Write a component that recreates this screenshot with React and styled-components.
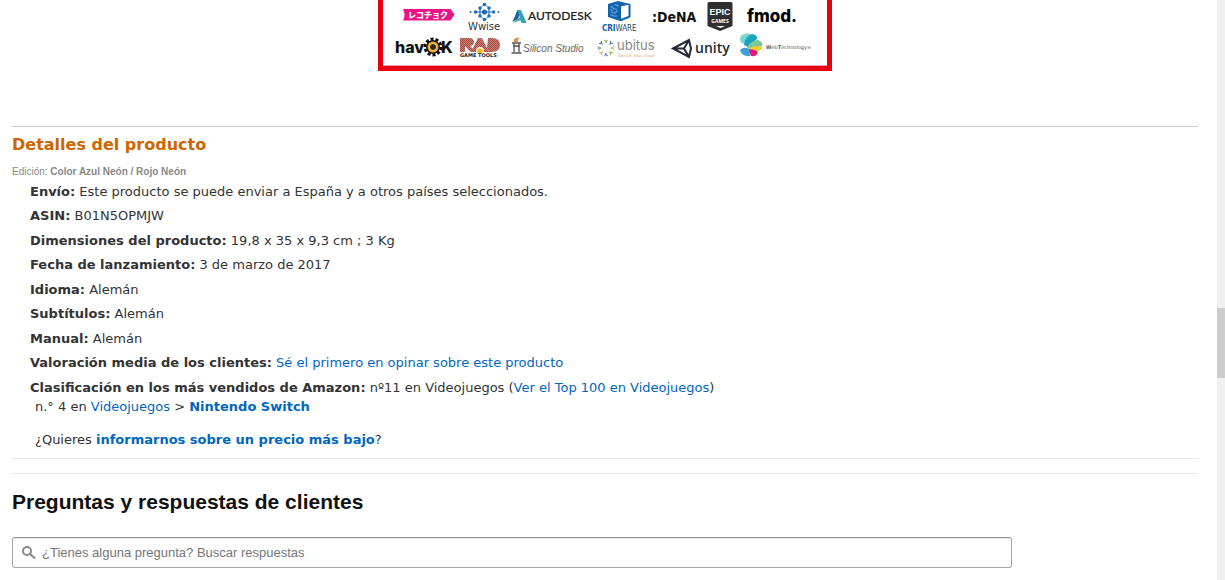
import React from 'react'
import styled, { createGlobalStyle } from 'styled-components'

const GlobalStyle = createGlobalStyle`
  * {
    box-sizing: border-box;
  }
  body {
    margin: 0;
    background: #fff;
    color: #333;
    font-family: Verdana, 'DejaVu Sans', sans-serif;
    font-size: 13px;
    line-height: 19px;
  }
`

const Page = styled.div`
  display: flex;
  min-height: 100vh;
`
const Main = styled.main`
  flex: 1;
  min-width: 0;
  padding: 0 19px 0 12px;
`
const ScrollTrack = styled.div`
  display: grid;
  grid-template-rows: 308fr 70fr 202fr;
  width: 8px;
  background: #f0f0f0;
`
const ScrollThumb = styled.div`
  grid-row: 2;
  background: #cdcdcd;
`
const Banner = styled.div`
  width: fit-content;
  margin: 0 auto 55px;
  border: solid #e60012;
  border-width: 0 5px 5px;

  svg {
    display: block;
  }
`
const Rule = styled.hr`
  margin: 0;
  border: 0;
  border-top: 1px solid ${(props) => (props.$dark ? '#ccc' : '#e7e7e7')};

  & + & {
    margin-top: 14px;
  }
`
const DetailsTitle = styled.h2`
  margin: 7px 0 8px;
  font-size: 16px;
  line-height: 22px;
  color: #c60;
`
const Edition = styled.p`
  margin: 0 0 3px;
  font-family: Arial, 'Liberation Sans', sans-serif;
  font-size: 10px;
  line-height: 15px;
  color: #888;
`
const DetailList = styled.ul`
  margin: 0 0 9px;
  padding: 0 0 0 18px;
  list-style: none;
`
const Detail = styled.li`
  margin-bottom: 5px;

  &:nth-child(even) {
    margin-bottom: 6px;
  }
  &:last-child {
    margin-bottom: 0;
  }
`
const Note = styled.p`
  margin: 0;
  padding-left: 5px;

  & + & {
    margin-top: 14px;
  }
`
const Link = styled.a`
  color: #0066c0;
  font-weight: ${(props) => (props.$bold ? 'bold' : 'normal')};
  text-decoration: none;

  &:hover {
    text-decoration: underline;
  }
`
const QuestionsTitle = styled.h2`
  margin: 14px 0 21px;
  font-family: Arial, 'Liberation Sans', sans-serif;
  font-size: 21px;
  line-height: 28px;
  color: #111;
`
const SearchBox = styled.label`
  display: flex;
  align-items: center;
  gap: 6px;
  max-width: 1000px;
  height: 31px;
  padding: 0 9px;
  border: 1px solid #a6a6a6;
  border-top-color: #949494;
  border-radius: 3px;
  box-shadow: 0 1px 0 rgba(0, 0, 0, 0.07) inset;
`
const SearchInput = styled.input`
  flex: 1;
  min-width: 0;
  padding: 0;
  border: 0;
  outline: 0;
  background: none;
  font-family: Arial, 'Liberation Sans', sans-serif;
  font-size: 13px;
  line-height: 19px;
  color: #111;

  &::placeholder {
    color: #767676;
    opacity: 1;
  }
`

const wwiseDots = [
  [470.5, 12, 1],
  [475.5, 12, 1.8],
  [480, 8, 1.8],
  [480, 16, 1.8],
  [484.5, 4.5, 1.8],
  [484.5, 12, 2.6],
  [484.5, 19.5, 1.8],
  [489, 8, 1.8],
  [489, 16, 1.8],
  [493.5, 12, 1.8],
  [498.5, 12, 1],
]

const burstColors = ['#8fae4a', '#4a78a8', '#c8b84a', '#8fae4a', '#5a82a8', '#c8b84a', '#6f9a58', '#4a78a8']

const Partners = () => (
  <svg width="444" height="66" viewBox="383 0 444 66" role="img" aria-label="Socios">
    <defs>
      <pattern id="hatch" width="2" height="2" patternUnits="userSpaceOnUse">
        <rect width="2" height="2" fill="#c9827a" />
        <rect width="1" height="1" fill="#a9483f" />
        <rect x="1" y="1" width="1" height="1" fill="#a9483f" />
      </pattern>
    </defs>
    <rect x="383" y="65" width="444" height="1" fill="#f9a9b0" />

    <path d="M403 9h47.500l4 5.500-4 6H403q3-5.500 0-11.500z" fill="#ee1289" />
    <text x="408" y="18" fill="#fff" fontFamily="Noto Sans CJK JP, sans-serif" fontWeight="900" fontSize="8">
      レコチョク
    </text>

    <path d="M475 12h19M480 8v8M489 8v8" stroke="#2b74b8" strokeWidth="1.200" />
    <path d="M480 8l4.500-3.500L489 8M480 16l4.500 3.500L489 16" fill="none" stroke="#2b74b8" strokeWidth="0.700" />
    {wwiseDots.map(([x, y, r]) => (
      <circle key={`${x}-${y}`} cx={x} cy={y} r={r} fill="#2070b8" />
    ))}
    <text x="468" y="30" fill="#333" fontFamily="DejaVu Sans, sans-serif" fontSize="10">
      Wwise
    </text>

    <path d="M512.500 22l5-12h3.500l-3 9z" fill="#1f5fa8" />
    <path d="M512.500 23l7-5.500 2 2.500z" fill="#41b59a" />
    <path d="M517.500 10h3.500l5.500 13h-5z" fill="#31a3b8" />
    <text
      x="528"
      y="20"
      fill="#222"
      stroke="#222"
      strokeWidth="0.200"
      fontFamily="Lato, sans-serif"
      fontWeight="500"
      fontSize="12"
    >
      AUTODESK
    </text>

    <path d="M608 4l10-3 12 3v13l-10 4-12-4z" fill="#1261ac" />
    <path d="M620.500 6l8-2v12l-8 3z" fill="#fff" />
    <path d="M620.500 6l9.500-2v13l-9.500 4z" fill="none" stroke="#1261ac" />
    <path
      d="M610 7h3v2h4M610 10h2v3h4v-2h2M610 15h3v1h4M614 5h4v2"
      fill="none"
      stroke="#9cc4e8"
      strokeWidth="0.700"
    />
    <text x="602" y="31" fontFamily="Liberation Sans Narrow, DejaVu Sans Condensed, sans-serif" fontSize="8">
      <tspan fill="#0d5ca8" fontWeight="bold">
        CRI
      </tspan>
      <tspan fill="#345">WARE</tspan>
    </text>

    <text x="652" y="22" fill="#111" fontFamily="DejaVu Sans Condensed, sans-serif" fontWeight="600" fontSize="14">
      :DeNA
    </text>

    <path d="M709 2h22q1.500 0 1.500 1.500V26l-12.500 5-12.500-5V3.500Q707.500 2 709 2z" fill="#2f2f33" />
    <g fill="#fff" textAnchor="middle" fontWeight="bold">
      <text x="720" y="15" fontFamily="Liberation Sans, sans-serif" fontSize="9">
        EPIC
      </text>
      <text x="720" y="23" fontFamily="Open Sans, sans-serif" fontSize="5">
        GAMES
      </text>
    </g>
    <path d="M716 26h9l-4.500 2z" fill="#fff" />

    <text x="747" y="22" fill="#000" fontFamily="Inter, sans-serif" fontWeight="800" fontSize="17">
      fmod.
    </text>

    <g fill="#111" fontFamily="Inter, sans-serif" fontWeight="800" fontSize="16">
      <text x="395" y="53">
        hav
      </text>
      <text x="441" y="53">
        K
      </text>
    </g>
    <circle cx="433" cy="47" r="8" fill="none" stroke="#111" strokeWidth="3" strokeDasharray="3 2" />
    <circle cx="433" cy="47" r="5.500" fill="none" stroke="#111" strokeWidth="3" />
    <circle cx="433" cy="47" r="4.500" fill="none" stroke="#f0a818" strokeWidth="2" />
    <circle cx="433" cy="47" r="3" fill="#3a2a10" />

    <path d="M460 38h9q5 0 5 4 0 3-4 4l6 6h-5l-6-6v6h-5z" fill="url(#hatch)" />
    <path d="M478 38h4l7 14h-18z" fill="url(#hatch)" />
    <path d="M488 38h4q8 0 8 7t-8 7h-3l-2-4z" fill="url(#hatch)" />
    <circle cx="480" cy="51" r="4" fill="#fff" />
    <circle cx="480" cy="51" r="2.800" fill="#f5b81c" />
    <text x="460" y="57" fill="#222" fontFamily="DejaVu Sans, sans-serif" fontWeight="bold" fontSize="5">
      GAME TOOLS
    </text>

    <path d="M511.500 53h10M512 43h9M514 43v9M519 43v9M513 46h7" stroke="#555" strokeWidth="1.300" fill="none" />
    <path d="M514 42q-1-3 2-4 2-1 4 0-3 1-2 4z" fill="#e88a4a" />
    <text x="523" y="52" fill="#666" fontFamily="Liberation Sans, sans-serif" fontStyle="italic" fontSize="10">
      Silicon Studio
    </text>

    {burstColors.map((color, i) => (
      <path
        key={i}
        d="M604 40q2 0 2 3 0-3 2-3"
        fill="none"
        stroke={color}
        transform={`rotate(${i * 45} 606 48)`}
      />
    ))}
    <text x="617" y="50" fill="#888" fontFamily="Inter, sans-serif" fontSize="13">
      ubitus
    </text>
    <text x="618" y="57" fill="#e79a5c" fontFamily="Liberation Serif, serif" fontStyle="italic" fontSize="5">
      Enrich, free cloud
    </text>

    <path
      d="M673 48.500L689 40l2 8.500-2 8.500zM673 48.500h11M684 48.500L689 40M684 48.500l5 8.500"
      fill="none"
      stroke="#222c37"
      strokeWidth="2"
    />
    <text x="695" y="53" fill="#222c37" fontFamily="Open Sans, sans-serif" fontWeight="600" fontSize="14">
      unity
    </text>

    <path d="M741 43q-3-7 3-9 6-2 7 1l-6 9z" fill="#7dd5d0" />
    <path d="M744 45q0-8 8-11 6 1 5 5l-9 8z" fill="#1aa6b8" />
    <path d="M747 48q4-8 11-8 6 2 4 6l-10 4z" fill="#7ac8a0" />
    <path d="M748 49q7-5 14-2 0 4-5 4z" fill="#f3d02a" />
    <path d="M747 49q8 0 11 3-1 5-7 4z" fill="#e5197e" />
    <path d="M740 50q4-4 9-1l1 7q-8 1-10-6z" fill="#3aa0dc" />
    <text x="766" y="49" fill="#555" fontFamily="DejaVu Sans, sans-serif" fontSize="5">
      <tspan fontWeight="bold">W</tspan>eb<tspan fontWeight="bold">T</tspan>echnology∞
    </text>
  </svg>
)

const SearchIcon = () => (
  <svg width="14" height="14" viewBox="0 0 14 14" fill="none" stroke="#888" aria-hidden="true">
    <circle cx="5" cy="5" r="4" strokeWidth="2" />
    <path d="M8 8l5 4.500" strokeWidth="2.200" />
  </svg>
)

const details = [
  ['Envío', 'Este producto se puede enviar a España y a otros países seleccionados.'],
  ['ASIN', 'B01N5OPMJW'],
  ['Dimensiones del producto', '19,8 x 35 x 9,3 cm ; 3 Kg'],
  ['Fecha de lanzamiento', '3 de marzo de 2017'],
  ['Idioma', 'Alemán'],
  ['Subtítulos', 'Alemán'],
  ['Manual', 'Alemán'],
  ['Valoración media de los clientes', <Link href="#opinar">Sé el primero en opinar sobre este producto</Link>],
  [
    'Clasificación en los más vendidos de Amazon',
    <>
      nº11 en Videojuegos (<Link href="#top">Ver el Top 100 en Videojuegos</Link>)
      <Note>
        n.° 4 en <Link href="#videojuegos">Videojuegos</Link> &gt;{' '}
        <Link href="#switch" $bold>
          Nintendo Switch
        </Link>
      </Note>
      <Note>
        ¿Quieres{' '}
        <Link href="#precio" $bold>
          informarnos sobre un precio más bajo
        </Link>
        ?
      </Note>
    </>,
  ],
]

export default function App() {
  return (
    <Page>
      <GlobalStyle />
      <Main>
        <Banner>
          <Partners />
        </Banner>
        <Rule $dark />
        <DetailsTitle>Detalles del producto</DetailsTitle>
        <Edition>
          Edición: <b>Color Azul Neón / Rojo Neón</b>
        </Edition>
        <DetailList>
          {details.map(([label, value]) => (
            <Detail key={label}>
              <b>{label}:</b> {value}
            </Detail>
          ))}
        </DetailList>
        <Rule />
        <Rule />
        <QuestionsTitle>Preguntas y respuestas de clientes</QuestionsTitle>
        <SearchBox>
          <SearchIcon />
          <SearchInput
            type="search"
            placeholder="¿Tienes alguna pregunta? Buscar respuestas"
            aria-label="¿Tienes alguna pregunta? Buscar respuestas"
          />
        </SearchBox>
      </Main>
      <ScrollTrack>
        <ScrollThumb />
      </ScrollTrack>
    </Page>
  )
}
